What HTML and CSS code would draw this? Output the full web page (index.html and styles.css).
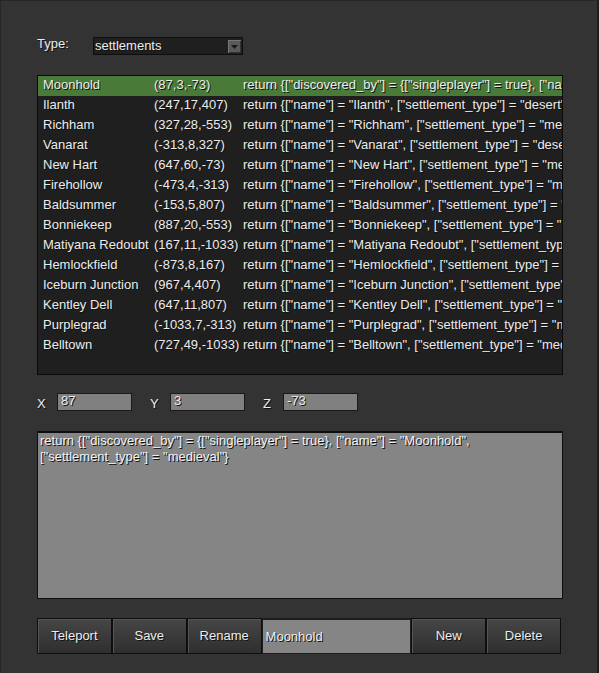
FILE: index.html
```html
<!DOCTYPE html>
<html>
<head>
<meta charset="utf-8">
<link rel="stylesheet" href="styles.css">
</head>
<body>
<div class="window">
  <div class="type-row">
    <span class="label">Type:</span>
    <div class="select">
      <span class="select-text">settlements</span>
      <span class="arrow"><svg width="13" height="13" viewBox="0 0 13 13"><path d="M3 5h7l-3.5 4z" fill="#1a1a1a"/></svg></span>
    </div>
  </div>
  <div class="list">
    <div class="row sel"><span>Moonhold</span><span>(87,3,-73)</span><span class="code">return {["discovered_by"] = {["singleplayer"] = true}, ["name"] = "Moonhold", ["settlement_type"] = "medieval"}</span></div>
    <div class="row"><span>Ilanth</span><span>(247,17,407)</span><span class="code">return {["name"] = "Ilanth", ["settlement_type"] = "desert"}</span></div>
    <div class="row"><span>Richham</span><span>(327,28,-553)</span><span class="code">return {["name"] = "Richham", ["settlement_type"] = "medieval"}</span></div>
    <div class="row"><span>Vanarat</span><span>(-313,8,327)</span><span class="code">return {["name"] = "Vanarat", ["settlement_type"] = "desert"}</span></div>
    <div class="row"><span>New Hart</span><span>(647,60,-73)</span><span class="code">return {["name"] = "New Hart", ["settlement_type"] = "medieval"}</span></div>
    <div class="row"><span>Firehollow</span><span>(-473,4,-313)</span><span class="code">return {["name"] = "Firehollow", ["settlement_type"] = "medieval"}</span></div>
    <div class="row"><span>Baldsummer</span><span>(-153,5,807)</span><span class="code">return {["name"] = "Baldsummer", ["settlement_type"] = "medieval"}</span></div>
    <div class="row"><span>Bonniekeep</span><span>(887,20,-553)</span><span class="code">return {["name"] = "Bonniekeep", ["settlement_type"] = "medieval"}</span></div>
    <div class="row"><span>Matiyana Redoubt</span><span>(167,11,-1033)</span><span class="code">return {["name"] = "Matiyana Redoubt", ["settlement_type"] = "desert"}</span></div>
    <div class="row"><span>Hemlockfield</span><span>(-873,8,167)</span><span class="code">return {["name"] = "Hemlockfield", ["settlement_type"] = "medieval"}</span></div>
    <div class="row"><span>Iceburn Junction</span><span>(967,4,407)</span><span class="code">return {["name"] = "Iceburn Junction", ["settlement_type"] = "medieval"}</span></div>
    <div class="row"><span>Kentley Dell</span><span>(647,11,807)</span><span class="code">return {["name"] = "Kentley Dell", ["settlement_type"] = "medieval"}</span></div>
    <div class="row"><span>Purplegrad</span><span>(-1033,7,-313)</span><span class="code">return {["name"] = "Purplegrad", ["settlement_type"] = "medieval"}</span></div>
    <div class="row"><span>Belltown</span><span>(727,49,-1033)</span><span class="code">return {["name"] = "Belltown", ["settlement_type"] = "medieval"}</span></div>
  </div>
  <div class="xyz">
    <span class="axis">X</span><div class="field">87</div>
    <span class="axis">Y</span><div class="field">3</div>
    <span class="axis">Z</span><div class="field">-73</div>
  </div>
  <div class="textarea">return {["discovered_by"] = {["singleplayer"] = true}, ["name"] = "Moonhold", ["settlement_type"] = "medieval"}</div>
  <div class="buttons">
    <div class="btn">Teleport</div>
    <div class="btn">Save</div>
    <div class="btn">Rename</div>
    <div class="name-field">Moonhold</div>
    <div class="btn">New</div>
    <div class="btn">Delete</div>
  </div>
</div>
</body>
</html>
```

FILE: styles.css
```css
html, body {
  margin: 0;
  padding: 0;
  background: #323232;
}
body {
  font-family: "Liberation Sans", Arial, sans-serif;
  font-size: 13px;
  color: #ececec;
}
.window {
  width: 599px;
  height: 673px;
  box-sizing: border-box;
  border-left: 1px solid #262626;
  border-top: 1px solid #262626;
  border-right: 2px solid #1e1e1e;
  background: #333333;
  padding: 36px 36px 0 36px;
  text-shadow: 1px 1px 0 #111;
}
.type-row {
  display: flex;
  align-items: center;
  height: 18px;
}
.label {
  width: 56px;
  margin-top: -5px;
}
.select {
  width: 150px;
  height: 18px;
  box-sizing: border-box;
  background: #1f1f1f;
  border: 1px solid #0e0e0e;
  display: flex;
  align-items: center;
  justify-content: space-between;
  padding-left: 1px;
}
.select-text {
  margin-top: -2px;
}
.arrow {
  width: 13px;
  height: 13px;
  margin-right: 1px;
  background: #5a5a5a;
  box-shadow: inset 1px 1px 0 #777, inset -1px -1px 0 #333;
  display: flex;
}
.list {
  margin-top: 20px;
  width: 526px;
  height: 300px;
  box-sizing: border-box;
  background: #1f1f1f;
  border: 1px solid #0a0a0a;
  overflow: hidden;
}
.row {
  display: grid;
  grid-template-columns: 111px 89px 1fr;
  height: 20px;
  line-height: 18px;
  padding-left: 5px;
  white-space: nowrap;
  overflow: hidden;
}
.row span {
  overflow: hidden;
}
.row.sel {
  background: #4a7a37;
}
.xyz {
  margin-top: 18px;
  display: flex;
  align-items: center;
  height: 18px;
}
.axis {
  width: 20px;
  margin-top: 3px;
}
.field {
  width: 75px;
  height: 18px;
  box-sizing: border-box;
  background: #808080;
  border: 1px solid #1a1a1a;
  padding-left: 3px;
  line-height: 13px;
  margin-right: 18px;
}
.textarea {
  margin-top: 20px;
  width: 526px;
  height: 168px;
  box-sizing: border-box;
  background: #858585;
  border: 1px solid #0e0e0e;
  border-top: 2px solid #0e0e0e;
  padding: 0 2px;
  line-height: 16px;
  color: #f2f2f2;
}
.buttons {
  margin-top: 19px;
  display: flex;
  height: 36px;
}
.btn {
  width: 75px;
  height: 36px;
  box-sizing: border-box;
  border: 1px solid #0e0e0e;
  background: linear-gradient(#464646, #2f2f2f);
  box-shadow: inset 1px 1px 0 #555;
  display: flex;
  align-items: center;
  justify-content: center;
  color: #ececec;
  padding-bottom: 1px;
}
.name-field {
  width: 150px;
  height: 36px;
  box-sizing: border-box;
  background: #858585;
  border: 1px solid #1e1e1e;
  border-top: 2px solid #1e1e1e;
  padding-left: 3px;
  padding-bottom: 1px;
  display: flex;
  align-items: center;
}
```
